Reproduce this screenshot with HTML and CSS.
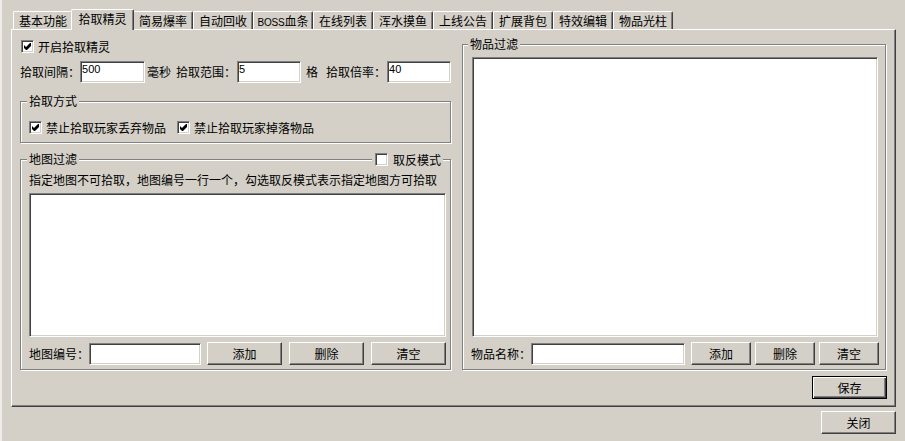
FILE: index.html
```html
<!DOCTYPE html>
<html lang="zh-CN">
<head>
    <meta charset="UTF-8">
    <title>拾取精灵</title>
    <link rel="stylesheet" href="styles.css">
</head>
<body>
<div class="window">
    <div class="tabs">
        <span class="tab">基本功能</span>
        <span class="tab active">拾取精灵</span>
        <span class="tab">简易爆率</span>
        <span class="tab">自动回收</span>
        <span class="tab"><span class="latin">BOSS</span>血条</span>
        <span class="tab">在线列表</span>
        <span class="tab">浑水摸鱼</span>
        <span class="tab">上线公告</span>
        <span class="tab">扩展背包</span>
        <span class="tab">特效编辑</span>
        <span class="tab">物品光柱</span>
    </div>
    <div class="panel">
        <div class="cols">
            <div class="left">
                <div class="check-row top-check">
                    <span class="check"><svg width="11" height="11" viewBox="0 0 11 11"><path d="M2 4L4 6L8 2L9 2L9 5L5 9L4 9L2 7Z" fill="#000"/></svg></span>
                    <span>开启拾取精灵</span>
                </div>
                <div class="form-row">
                    <span>拾取间隔：</span>
                    <input class="field num w65" value="500">
                    <span class="unit-ms">毫秒</span>
                    <span class="lbl-range">拾取范围：</span>
                    <input class="field num w64" value="5">
                    <span class="unit-cell">格</span>
                    <span class="lbl-rate">拾取倍率：</span>
                    <input class="field num w64" value="40">
                </div>
                <fieldset class="group group-way">
                    <legend>拾取方式</legend>
                    <div class="check-line">
                        <div class="check-row">
                            <span class="check"><svg width="11" height="11" viewBox="0 0 11 11"><path d="M2 4L4 6L8 2L9 2L9 5L5 9L4 9L2 7Z" fill="#000"/></svg></span>
                            <span>禁止拾取玩家丢弃物品</span>
                        </div>
                        <div class="check-row second">
                            <span class="check"><svg width="11" height="11" viewBox="0 0 11 11"><path d="M2 4L4 6L8 2L9 2L9 5L5 9L4 9L2 7Z" fill="#000"/></svg></span>
                            <span>禁止拾取玩家掉落物品</span>
                        </div>
                    </div>
                </fieldset>
                <fieldset class="group group-map">
                    <legend>地图过滤</legend>
                    <div class="check-row invert">
                        <span class="check"></span>
                        <span>取反模式</span>
                    </div>
                    <div class="hint">指定地图不可拾取，地图编号一行一个，勾选取反模式表示指定地图方可拾取</div>
                    <textarea class="field list"></textarea>
                    <div class="action-row">
                        <span>地图编号：</span>
                        <input class="field grow">
                        <button class="btn wide">添加</button>
                        <button class="btn wide">删除</button>
                        <button class="btn wide">清空</button>
                    </div>
                </fieldset>
            </div>
            <fieldset class="group group-item">
                <legend>物品过滤</legend>
                <textarea class="field list"></textarea>
                <div class="action-row narrow">
                    <span>物品名称：</span>
                    <input class="field grow">
                    <button class="btn small">添加</button>
                    <button class="btn small">删除</button>
                    <button class="btn small">清空</button>
                </div>
            </fieldset>
        </div>
        <div class="save-row">
            <button class="btn wide default">保存</button>
        </div>
    </div>
    <div class="close-row">
        <button class="btn wide">关闭</button>
    </div>
</div>
</body>
</html>
```
FILE: styles.css
```css
* {
    box-sizing: border-box;
}
body {
    margin: 0;
    background: #d4d0c8;
    color: #000;
    font: 12px/14px "Noto Sans CJK SC", sans-serif;
}
.window {
    width: 905px;
    height: 441px;
    border-left: 2px solid #efede9;
    padding: 9px 0 0 9px;
}

/* tabs */
.tabs {
    display: flex;
    align-items: flex-end;
    height: 20px;
    padding-left: 2px;
    position: relative;
    z-index: 1;
}
.tab {
    flex: none;
    width: 60px;
    height: 18px;
    padding-top: 2px;
    text-align: center;
    white-space: nowrap;
    background: #d4d0c8;
    border-top: 1px solid #fff;
    border-left: 1px solid #fff;
    border-right: 1px solid #404040;
    border-radius: 2px 2px 0 0;
    box-shadow: inset -1px 0 #808080;
}
.tab .latin {
    font: 10px "Liberation Sans", sans-serif;
    letter-spacing: -0.2px;
}
.tab.active {
    position: relative;
    width: 63px;
    height: 21px;
    margin: 0 -1px -1px -2px;
    padding-top: 2px;
}

/* panel */
.panel {
    width: 885px;
    height: 378px;
    border: 1px solid;
    border-color: #fff #404040 #404040 #fff;
    box-shadow: inset -1px -1px #808080;
    padding: 0 9px 0 8px;
    display: flex;
    flex-direction: column;
}
.cols {
    display: grid;
    grid-template-columns: 431px 424px;
    column-gap: 11px;
    height: 340px;
}
.left {
    display: flex;
    flex-direction: column;
}

/* sunken fields */
.field {
    margin: 0;
    border: 1px solid;
    border-color: #808080 #fff #fff #808080;
    box-shadow: inset 1px 1px #404040, inset -1px -1px #d4d0c8;
    background: #fff;
    outline: none;
}
.num {
    height: 22px;
    padding: 0 1px 7px;
    font: 11px "Liberation Sans", sans-serif;
}
.w65 { width: 65px; }
.w64 { width: 64px; }

/* checkbox */
.check-row {
    display: flex;
    align-items: center;
    gap: 4px;
    height: 13px;
    white-space: nowrap;
}
.check {
    flex: none;
    display: flex;
    width: 13px;
    height: 13px;
    border: 1px solid;
    border-color: #808080 #fff #fff #808080;
    box-shadow: inset 1px 1px #404040, inset -1px -1px #d4d0c8;
    background: #fff;
}
.top-check {
    margin: 10px 0 0 1px;
}

.form-row {
    display: flex;
    align-items: center;
    height: 22px;
    margin-top: 8px;
    white-space: nowrap;
}
.unit-ms { margin-left: 2px; }
.lbl-range { margin-left: 5px; margin-right: 1px; }
.unit-cell { margin-left: 5px; }
.lbl-rate { margin-left: 8px; margin-right: 1px; }

/* etched group boxes */
.group {
    margin: 0;
    min-width: 0;
    border: 1px solid #808080;
    box-shadow: inset 1px 1px #fff, 1px 1px #fff;
}
.group legend {
    padding: 0 2px;
    margin-left: -2px;
    line-height: 14px;
    background: #d4d0c8;
}
.group-way {
    margin-top: 11px;
    padding: 13px 8px 8px;
}
.check-line {
    display: flex;
}
.check-line .second {
    margin-left: 11px;
}
.group-map {
    position: relative;
    flex: 1;
    margin-top: 9px;
    padding: 0 4px 4px 8px;
    display: flex;
    flex-direction: column;
}
.invert {
    position: absolute;
    top: -13px;
    right: 7px;
    gap: 5px;
    padding: 0 2px 0 3px;
    background: #d4d0c8;
}
.hint {
    margin-top: 7px;
    white-space: nowrap;
}
.list {
    display: block;
    flex: 1;
    width: 100%;
    resize: none;
    overflow: hidden;
}
.group-map .list {
    margin-top: 6px;
}
.group-item {
    margin-top: 7px;
    padding: 6px 7px 4px 9px;
    display: flex;
    flex-direction: column;
}
.group-item legend {
    margin-left: -4px;
}

/* bottom rows */
.action-row {
    display: flex;
    align-items: center;
    height: 23px;
    margin-top: 5px;
    white-space: nowrap;
}
.action-row .grow {
    flex: 1;
    min-width: 0;
    height: 22px;
}
.action-row.narrow {
    margin-left: -1px;
    margin-right: -1px;
}
.btn {
    flex: none;
    height: 23px;
    padding: 0;
    font: inherit;
    color: #000;
    background: #d4d0c8;
    border: 1px solid;
    border-color: #fff #404040 #404040 #fff;
    box-shadow: inset -1px -1px #808080;
}
.btn.wide {
    width: 75px;
    margin-left: 7px;
}
.btn.small {
    width: 60px;
    margin-left: 4px;
}
.action-row .grow + .btn {
    margin-left: 6px;
}
.btn.default {
    border: 1px solid #000;
    box-shadow: inset 1px 1px #fff, inset -1px -1px #404040, inset -2px -2px #808080;
}
.save-row {
    display: flex;
    justify-content: flex-end;
    margin: 6px -1px 0 0;
}
.close-row {
    display: flex;
    justify-content: flex-end;
    width: 885px;
    margin-top: 4px;
}
```
